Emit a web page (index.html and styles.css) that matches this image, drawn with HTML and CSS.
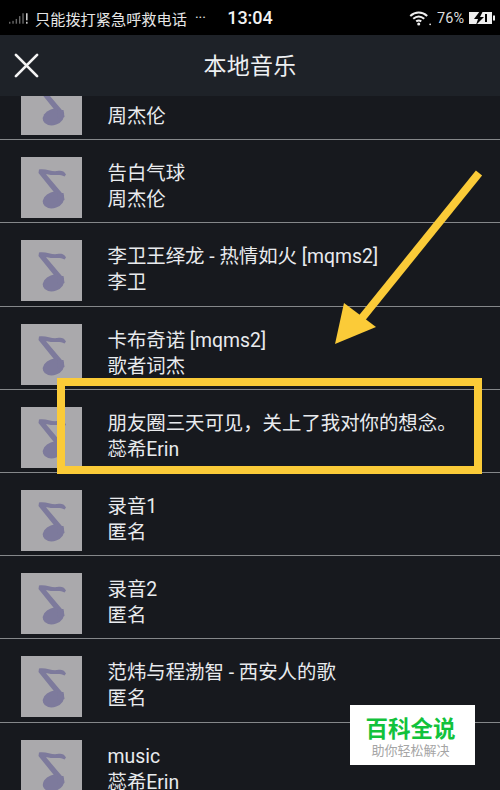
FILE: index.html
```html
<!DOCTYPE html>
<html lang="zh">
<head>
<meta charset="utf-8">
<title>本地音乐</title>
<link rel="stylesheet" href="styles.css">
</head>
<body>
<svg class="defs" width="0" height="0" aria-hidden="true">
  <symbol id="note" viewBox="0 0 61 61">
    <path class="note-line" d="M18 12.500C24 11 31 15 36 14C39 13.500 43 13 45 17.500L43.500 19.500C39 17 35 18.500 30 18C28 17.800 26.500 17.300 25 17.300L43 38.500L38.500 42L17.500 16Z"/>
    <ellipse class="note-line" cx="32.500" cy="43" rx="11" ry="8" transform="rotate(-20 32.500 43)"/>
    <path class="note-line" d="M36 36L42.500 36L43.500 43L37 45Z"/>
  </symbol>
</svg>
<div class="screen">
  <div class="status">
    <div class="status-left">
      <svg class="signal" viewBox="0 0 20 14" aria-hidden="true">
        <rect x="0" y="11" width="1.500" height="2"/><rect x="3.500" y="10" width="1.500" height="3"/><rect x="7" y="8" width="1.500" height="5"/><rect x="10.500" y="5" width="1.500" height="8"/><rect x="14" y="2" width="1.500" height="11"/><rect class="bang" x="18" y="2" width="1.500" height="7.500"/><rect class="bang" x="18" y="11" width="1.500" height="2"/>
      </svg>
      <span class="status-text">只能拨打紧急呼救电话</span>
      <span class="status-dots">···</span>
    </div>
    <span class="status-time">13:04</span>
    <div class="status-right">
      <svg class="wifi" viewBox="0 0 26 18" aria-hidden="true">
        <path class="wifi-arc" d="M1.500 6.500C7.500 1 15.500 1 21.500 6.500"/>
        <path class="wifi-arc" d="M5 10C9 6.500 14 6.500 18 10"/>
        <path class="wifi-arc" d="M8.500 13C10.500 11.500 12.500 11.500 14.500 13"/>
        <circle class="wifi-dot" cx="11.500" cy="16" r="1.800"/>
        <circle class="wifi-dot" cx="25" cy="16.500" r="1"/>
      </svg>
      <span class="status-batt">76%</span>
      <svg class="battery" viewBox="0 0 26 14" aria-hidden="true">
        <path class="batt-body" d="M0 1H23V13H0Z"/>
        <path class="batt-bolt" d="M11 0L5 8H9L7 14L15 6H11L14 0Z"/>
        <path class="batt-gap" d="M16 3H18V11H16Z"/>
        <rect class="batt-cap" x="24" y="4.500" width="2" height="5"/>
      </svg>
    </div>
  </div>
  <header class="header">
    <svg class="close" viewBox="0 0 26 26" aria-hidden="true"><path d="M2 2L24 24M24 2L2 24"/></svg>
    <h1 class="title">本地音乐</h1>
  </header>
  <div class="list">
    <ul class="rows">
      <li class="row"><svg class="cover"><use href="#note"/></svg><div class="meta"><div class="line"></div><div class="line">周杰伦</div></div></li>
      <li class="row"><svg class="cover"><use href="#note"/></svg><div class="meta"><div class="line">告白气球</div><div class="line">周杰伦</div></div></li>
      <li class="row"><svg class="cover"><use href="#note"/></svg><div class="meta"><div class="line">李卫王绎龙 - 热情如火 [mqms2]</div><div class="line">李卫</div></div></li>
      <li class="row"><svg class="cover"><use href="#note"/></svg><div class="meta"><div class="line">卡布奇诺 [mqms2]</div><div class="line">歌者词杰</div></div></li>
      <li class="row"><svg class="cover"><use href="#note"/></svg><div class="meta"><div class="line">朋友圈三天可见，关上了我对你的想念。</div><div class="line">蕊希Erin</div></div></li>
      <li class="row"><svg class="cover"><use href="#note"/></svg><div class="meta"><div class="line">录音1</div><div class="line">匿名</div></div></li>
      <li class="row"><svg class="cover"><use href="#note"/></svg><div class="meta"><div class="line">录音2</div><div class="line">匿名</div></div></li>
      <li class="row"><svg class="cover"><use href="#note"/></svg><div class="meta"><div class="line">范炜与程渤智 - 西安人的歌</div><div class="line">匿名</div></div></li>
      <li class="row"><svg class="cover"><use href="#note"/></svg><div class="meta"><div class="line">music</div><div class="line">蕊希Erin</div></div></li>
    </ul>
  </div>
  <div class="highlight"></div>
  <svg class="arrow" viewBox="0 0 500 790" aria-hidden="true">
    <path class="arrow-line" d="M479 173L362 318"/>
    <path class="arrow-head" d="M335 344L344 303L376 327Z"/>
  </svg>
  <div class="badge">
    <div class="badge-name">百科全说</div>
    <div class="badge-sub">助你轻松解决</div>
  </div>
</div>
</body>
</html>
```
FILE: styles.css
```css
* { box-sizing: border-box; }
html, body { margin: 0; padding: 0; }
body { background: #17191e; font-family: Roboto, "Noto Sans CJK SC", sans-serif; color: #eceef0; }
.defs { display: block; height: 0; }
.screen { position: relative; width: 500px; height: 790px; overflow: hidden; background: #17191e; }

.status { height: 35px; background: #000; display: grid; grid-template-columns: 1fr auto 1fr; align-items: center; padding: 0 5px 0 9px; color: #e6e6e6; }
.status-left { display: flex; align-items: center; min-width: 0; }
.signal { width: 19px; height: 14px; fill: #666; margin-right: 7px; flex: none; }
.signal .bang { fill: #e0e0e0; }
.status-text { font-size: 15.200px; white-space: nowrap; }
.status-dots { font-size: 14px; margin-left: 8px; }
.status-time { font-size: 18px; font-weight: 500; color: #f2f2f2; margin-left: -4px; }
.status-right { display: flex; align-items: center; justify-content: flex-end; }
.wifi { width: 22px; height: 16px; margin-right: 6px; }
.wifi-arc { fill: none; stroke: #eee; stroke-width: 2.400; }
.wifi-dot { fill: #eee; }
.status-batt { font-size: 14.500px; color: #ddd; margin-right: 5px; position: relative; top: 1px; }
.battery { width: 26px; height: 14px; }
.batt-body, .batt-cap { fill: #eee; }
.batt-bolt, .batt-gap { fill: #000; }

.header { height: 61px; background: #1e2228; display: flex; align-items: center; justify-content: center; position: relative; padding-bottom: 3px; }
.close { position: absolute; left: 14px; top: 18px; width: 25px; height: 25px; fill: none; stroke: #f4f4f4; stroke-width: 2.800; stroke-linecap: round; }
.title { margin: 0; font-size: 23px; font-weight: 400; color: #eef0f2; letter-spacing: 0.300px; }

.list { height: 694px; overflow: hidden; }
.rows { list-style: none; margin: -39px 0 0; padding: 0; }
.row { height: 83.200px; border-bottom: 1px solid #85878a; display: flex; align-items: center; padding: 13px 0 0 21px; }
.cover { width: 61px; height: 61px; background: #aaa9ac; flex: none; }
.note-line { fill: #7d7a9c; }
.meta { margin: 0 0 1px 25.500px; font-size: 19.400px; white-space: nowrap; color: #e9ebee; }
.line { height: 26px; line-height: 26px; }

.highlight { position: absolute; left: 57px; top: 378px; width: 425px; height: 96px; border: 8.500px solid #fbcb38; }
.arrow { position: absolute; left: 0; top: 0; width: 500px; height: 790px; pointer-events: none; }
.arrow-line { stroke: #fbcb38; stroke-width: 8; fill: none; }
.arrow-head { fill: #fbcb38; }

.badge { position: absolute; left: 350px; top: 705px; width: 125px; height: 60px; background: #fff; text-align: center; padding: 11px 4px 0 0; }
.badge-name { font-size: 22.500px; line-height: 26px; font-weight: 700; color: #12c23c; }
.badge-sub { font-size: 13px; line-height: 17px; color: #a5a5a5; }
```
